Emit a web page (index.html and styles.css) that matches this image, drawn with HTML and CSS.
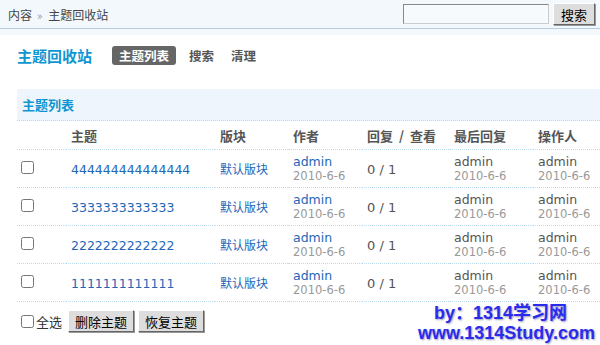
FILE: index.html
```html
<!DOCTYPE html>
<html lang="zh-CN">
<head>
    <meta charset="UTF-8">
    <title>主题回收站</title>
    <link rel="stylesheet" href="styles.css">
</head>
<body>
    <!-- 顶部导航 -->
    <div class="topbar">
        <div class="crumb">内容<span class="sep">»</span>主题回收站</div>
        <form class="search">
            <input type="text" class="search-input">
            <button type="button" class="btn btn-search">搜索</button>
        </form>
    </div>
    <div class="topbar-line"></div>

    <div class="main">
        <!-- 标题和标签 -->
        <div class="title-row">
            <h2 class="title">主题回收站</h2>
            <ul class="tabs">
                <li class="tab active">主题列表</li>
                <li class="tab">搜索</li>
                <li class="tab">清理</li>
            </ul>
        </div>

        <div class="section-head">主题列表</div>

        <table class="list">
            <thead>
                <tr>
                    <th class="col-check"></th>
                    <th class="col-subject">主题</th>
                    <th class="col-forum">版块</th>
                    <th class="col-author">作者</th>
                    <th class="col-reply">回复<span class="slash">/</span>查看</th>
                    <th class="col-last">最后回复</th>
                    <th>操作人</th>
                </tr>
            </thead>
            <tbody>
                <tr>
                    <td class="col-check"><input type="checkbox"></td>
                    <td><a href="#">444444444444444</a></td>
                    <td><a href="#">默认版块</a></td>
                    <td><a href="#">admin</a><em>2010-6-6</em></td>
                    <td class="num">0 / 1</td>
                    <td>admin<em>2010-6-6</em></td>
                    <td>admin<em>2010-6-6</em></td>
                </tr>
                <tr>
                    <td class="col-check"><input type="checkbox"></td>
                    <td><a href="#">3333333333333</a></td>
                    <td><a href="#">默认版块</a></td>
                    <td><a href="#">admin</a><em>2010-6-6</em></td>
                    <td class="num">0 / 1</td>
                    <td>admin<em>2010-6-6</em></td>
                    <td>admin<em>2010-6-6</em></td>
                </tr>
                <tr>
                    <td class="col-check"><input type="checkbox"></td>
                    <td><a href="#">2222222222222</a></td>
                    <td><a href="#">默认版块</a></td>
                    <td><a href="#">admin</a><em>2010-6-6</em></td>
                    <td class="num">0 / 1</td>
                    <td>admin<em>2010-6-6</em></td>
                    <td>admin<em>2010-6-6</em></td>
                </tr>
                <tr>
                    <td class="col-check"><input type="checkbox"></td>
                    <td><a href="#">1111111111111</a></td>
                    <td><a href="#">默认版块</a></td>
                    <td><a href="#">admin</a><em>2010-6-6</em></td>
                    <td class="num">0 / 1</td>
                    <td>admin<em>2010-6-6</em></td>
                    <td>admin<em>2010-6-6</em></td>
                </tr>
            </tbody>
        </table>

        <!-- 底部操作 -->
        <div class="actions">
            <label class="check-all"><input type="checkbox">全选</label>
            <button type="button" class="btn">删除主题</button>
            <button type="button" class="btn">恢复主题</button>
        </div>
    </div>

    <!-- 水印 -->
    <div class="watermark">
        <p>by：1314学习网</p>
        <p>www.1314Study.com</p>
    </div>
</body>
</html>
```

FILE: styles.css
```css
* {
    margin: 0;
    padding: 0;
}
ul {
    list-style: none;
}
body {
    position: relative;
    width: 600px;
    height: 345px;
    overflow: hidden;
    font: 12px "DejaVu Sans", "Noto Sans CJK SC", sans-serif;
    color: #333;
    background: #fff;
}
a {
    color: #2366b8;
    text-decoration: none;
}

/* 顶部 */
.topbar {
    display: flex;
    align-items: center;
    justify-content: space-between;
    height: 28px;
    padding: 0 5px 0 8px;
    background: #f2f8fb;
    border-bottom: 1px solid #b5cfe1;
}
.crumb {
    font-family: "Noto Sans CJK SC", sans-serif;
    font-size: 12px;
    color: #444;
}
.crumb .sep {
    margin: 0 6px 0 5px;
    color: #7a9ab8;
    font-size: 11px;
}
.search {
    display: flex;
    align-items: center;
    gap: 4px;
}
.search-input {
    width: 146px;
    height: 20px;
    box-sizing: border-box;
    border: 1px solid #888;
    border-right-color: #ccc;
    border-bottom-color: #ccc;
    background: #f7fafc;
}
.topbar-line {
    height: 6px;
    background: #f3f8fc;
}
.btn {
    height: 22px;
    padding: 0 6px;
    font: 13px "Noto Sans CJK SC", sans-serif;
    color: #000;
    background: #ddd;
    border: 1px solid #fff;
    border-right-color: #666;
    border-bottom-color: #666;
    box-shadow: 1px 1px 0 #999;
}
.btn-search {
    width: 42px;
    height: 22px;
    padding: 0;
}

/* 主体 */
.main {
    padding-left: 17px;
}
.title-row {
    display: flex;
    align-items: center;
    height: 20px;
    margin-top: 10px;
}
.title {
    width: 95px;
    font: bold 15px "Noto Sans CJK SC", sans-serif;
    color: #0f96d2;
}
.tabs {
    display: flex;
    align-items: center;
    gap: 9px;
}
.tab {
    padding: 0 4px;
    font: bold 12.5px/19px "Noto Sans CJK SC", sans-serif;
    color: #555;
}
.tab.active {
    padding: 0 7px;
    color: #fff;
    background: #666;
    border-radius: 3px;
}
.section-head {
    height: 31px;
    margin-top: 24px;
    padding-left: 5px;
    font: bold 13px/31px "Noto Sans CJK SC", sans-serif;
    color: #0f96d2;
    background: #eef5fc;
    border-bottom: 1px dotted #b9dcf0;
}

/* 列表 */
.list {
    width: 583px;
    border-collapse: collapse;
}
.list th,
.list td {
    padding: 0 5px;
    text-align: left;
    vertical-align: middle;
    border-bottom: 1px dotted #b9dcf0;
}
.list th {
    height: 28px;
    font: bold 13px "Noto Sans CJK SC", sans-serif;
    color: #555;
}
.list th .slash {
    margin: 0 6px;
}
.list td {
    height: 36px;
    padding-top: 1px;
    line-height: 15px;
    font-size: 12.5px;
    color: #555;
}
.list td a {
    color: #2366b8;
}
.list td em {
    display: block;
    font-style: normal;
    font-size: 11.5px;
    color: #999;
}
.list .col-check {
    width: 40px;
    padding-left: 4px;
}
.list .col-subject {
    width: 139px;
}
.list .col-forum {
    width: 63px;
}
.list .col-author {
    width: 64px;
}
.list .col-reply {
    width: 77px;
}
.list .col-last {
    width: 74px;
}
.list td:nth-child(3) a {
    font-family: "Noto Sans CJK SC", sans-serif;
    font-size: 12px;
}
.list td.num {
    font-size: 13px;
}
.list input[type=checkbox],
.check-all input {
    width: 13px;
    height: 13px;
    margin: 0;
}

/* 底部操作 */
.actions {
    display: flex;
    align-items: center;
    gap: 4px;
    margin-top: 8px;
    padding-left: 4px;
}
.check-all {
    display: flex;
    align-items: center;
    gap: 2px;
    margin-right: 2px;
    font: 13px "Noto Sans CJK SC", sans-serif;
    color: #333;
}

/* 水印 */
.watermark {
    position: absolute;
    right: 5px;
    bottom: 2px;
    text-align: right;
    font: bold 18px/20px "Liberation Sans", "Noto Sans CJK SC", sans-serif;
    color: #2b2bee;
    text-shadow: 1px 1px 2px #9a9ab8;
}
.watermark p:first-child {
    margin-right: 28px;
}
```
